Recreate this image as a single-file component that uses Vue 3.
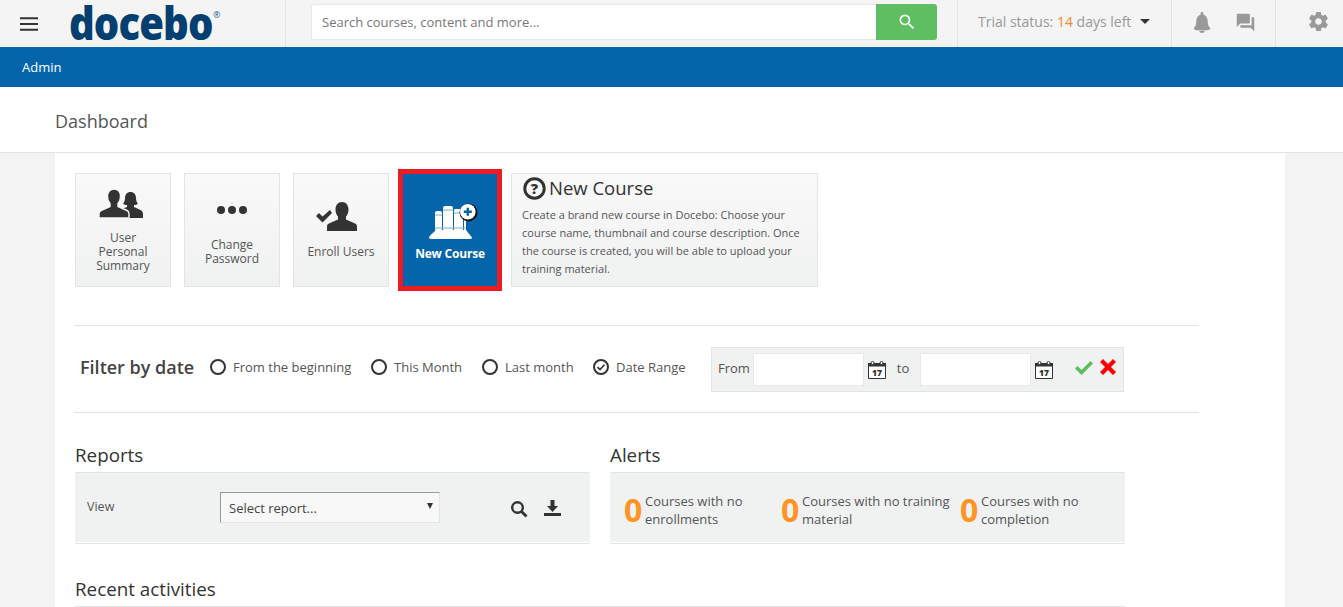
<script setup>
const alerts = [
  { label: 'Courses with no enrollments', w: 157, tw: 120 },
  { label: 'Courses with no training material', w: 179, tw: 152 },
  { label: 'Courses with no completion', w: 140, tw: 120 }
]
const radios = [
  { label: 'From the beginning', w: 161, on: false },
  { label: 'This Month', w: 111, on: false },
  { label: 'Last month', w: 111, on: false },
  { label: 'Date Range', w: 100, on: true }
]
const person = 'M15 0c4 0 6.500 3 6.500 7.500 0 3-1 5.500-2.500 7v3l9 4c1.500.7 2 1.800 2 3.500v4H0v-4c0-1.700.5-2.800 2-3.500l9-4v-3C9.500 13 8.500 10.500 8.500 7.500 8.500 3 11 0 15 0z'
</script>

<template>
  <div class="page">
    <header class="top">
      <div class="brand">
        <svg class="burger" width="18" height="14" viewBox="0 0 18 14"><path d="M0 1.200h18M0 7h18M0 12.800h18" stroke="#333" stroke-width="2"/></svg>
        <span class="logo">docebo</span><span class="reg">®</span>
      </div>
      <div class="search">
        <div class="search-input">Search courses, content and more...</div>
        <div class="search-btn">
          <svg width="20" height="20" viewBox="0 0 24 24" fill="#fff"><path d="M15.500 14h-.79l-.28-.27A6.471 6.471 0 0 0 16 9.500 6.500 6.500 0 1 0 9.500 16c1.610 0 3.090-.59 4.230-1.570l.27.28v.79l5 4.990L20.490 19l-4.990-5zm-6 0C7.010 14 5 11.990 5 9.500S7.010 5 9.500 5 14 7.010 14 9.500 11.990 14 9.500 14z"/></svg>
        </div>
      </div>
      <div class="trial">
        <span>Trial status: <b>14</b> days left</span>
        <i class="caret"></i>
      </div>
      <div class="notify">
        <svg width="24" height="24" viewBox="0 0 24 24" fill="#999"><path d="M12 23c1.500 0 2.600-.9 2.600-2H9.400c0 1.100 1.100 2 2.600 2zm8-4.500v-1c-1.600-1.300-2.300-2.700-2.300-6.500 0-3.300-1.800-5.600-4.300-6.300V3.500a1.400 1.400 0 0 0-2.800 0v1.200C8.100 5.400 6.300 7.700 6.300 11c0 3.800-.7 5.200-2.300 6.500v1c0 1 1 1.500 3 1.700 1.500.2 3.200.3 5 .3s3.500-.1 5-.3c2-.2 3-.7 3-1.700z"/></svg>
        <svg width="21" height="21" viewBox="0 0 24 24" fill="#999"><path d="M21 6h-2v9H6v2c0 .55.45 1 1 1h11l4 4V7c0-.55-.45-1-1-1zm-4 6V3c0-.55-.45-1-1-1H3c-.55 0-1 .45-1 1v14l4-4h10c.55 0 1-.45 1-1z"/></svg>
      </div>
      <div class="gear">
        <svg width="23" height="23" viewBox="0 0 24 24" fill="#999"><path d="M19.430 12.980c.04-.32.07-.64.07-.98s-.03-.66-.07-.98l2.110-1.650c.19-.15.24-.42.12-.64l-2-3.460c-.12-.22-.39-.3-.61-.22l-2.490 1c-.52-.4-1.080-.73-1.690-.98l-.38-2.650A.488.488 0 0 0 14 2h-4c-.25 0-.46.18-.49.42l-.38 2.650c-.61.25-1.170.59-1.690.98l-2.490-1c-.23-.09-.49 0-.61.22l-2 3.460c-.13.22-.07.49.12.64l2.110 1.650c-.04.32-.07.65-.07.98s.03.66.07.98l-2.110 1.650c-.19.15-.24.42-.12.64l2 3.460c.12.22.39.3.61.22l2.490-1c.52.4 1.080.73 1.690.98l.38 2.650c.03.24.24.42.49.42h4c.25 0 .46-.18.49-.42l.38-2.650c.61-.25 1.170-.59 1.690-.98l2.490 1c.23.09.49 0 .61-.22l2-3.460c.12-.22.07-.49-.12-.64l-2.110-1.650zM12 15.500c-1.930 0-3.500-1.570-3.500-3.500s1.570-3.500 3.500-3.500 3.500 1.570 3.500 3.500-1.570 3.500-3.500 3.500z"/></svg>
      </div>
    </header>

    <nav class="adminbar">Admin</nav>
    <div class="titlebar">Dashboard</div>

    <main class="content">
      <section class="cards">
        <div class="card">
          <svg width="44" height="29" viewBox="0 0 44 29" fill="#333">
            <path d="M31.500 3c3.500 0 5.500 2.600 5.500 6 0 2.600.8 4.500 2 5.700-1 .9-2.400 1.300-4 1.300v2l6 2.800c1.800.8 3 1.800 3 4.200v4H23v-9c1.500-.8 3-1.400 5-2v-2c-1.600 0-3-.4-4-1.300 1.200-1.200 2-3.100 2-5.700 0-3.400 2-6 5.500-6z"/>
            <path :d="person" stroke="#f5f6f6" stroke-width="1.400"/>
          </svg>
          <span class="t1">User Personal Summary</span>
        </div>
        <div class="card">
          <svg width="32" height="12" viewBox="0 0 32 12" fill="#333"><circle cx="5" cy="6" r="4"/><circle cx="16" cy="6" r="4"/><circle cx="27" cy="6" r="4"/></svg>
          <span class="t2">Change Password</span>
        </div>
        <div class="card">
          <svg width="42" height="30" viewBox="0 0 42 30" fill="#333">
            <path d="M0 14l3-3 3.500 3.500L14 8l2 3-9.500 9.500z"/>
            <path :d="person" transform="translate(11 0)"/>
          </svg>
          <span class="t3">Enroll Users</span>
        </div>
        <div class="hot">
          <div class="hot-in">
            <svg width="50" height="36" viewBox="0 0 50 36">
              <path d="M1 34.500c0-1 1.500-2.500 7-7.500h30l6 7.500c0 .8-.5 1.500-2 1.500H3c-1.200 0-2-.6-2-1.500z" fill="#fff"/>
              <g fill="#fff"><rect x="7" y="8" width="7" height="20" rx="2"/><rect x="15" y="3" width="10" height="25" rx="2"/><rect x="26" y="6" width="9" height="22" rx="1"/><rect x="36" y="14" width="2" height="14"/></g>
              <path d="M7 12h7M15 7h10M26 10h9M7 25h31" stroke="#7fabcd" stroke-width="1"/>
              <circle cx="40.500" cy="9.500" r="9" fill="#111"/>
              <circle cx="39.800" cy="8.800" r="7.800" fill="#fff"/>
              <path d="M39.800 4.800v8M35.800 8.800h8" stroke="#0565ab" stroke-width="2.400"/>
            </svg>
            <span class="t4">New Course</span>
          </div>
        </div>
        <div class="info">
          <div class="info-h">
            <svg width="23" height="23" viewBox="0 0 22 22"><circle cx="11" cy="11" r="9.300" fill="none" stroke="#333" stroke-width="2.800"/><text x="11" y="16" text-anchor="middle" class="qm">?</text></svg>
            <span>New Course</span>
          </div>
          <p>Create a brand new course in Docebo: Choose your course name, thumbnail and course description. Once the course is created, you will be able to upload your training material.</p>
        </div>
      </section>

      <section class="filter">
        <h2>Filter by date</h2>
        <div class="radios">
          <label v-for="r in radios" :key="r.label" class="radio" :style="{ width: r.w + 'px' }">
            <i class="dot">
              <svg v-if="r.on" width="10" height="10" viewBox="0 0 10 10"><path d="M1.500 5.200l2.500 2.400 4.500-4.800" fill="none" stroke="#333" stroke-width="1.600"/></svg>
            </i>
            {{ r.label }}
          </label>
        </div>
        <div class="range">
          <span class="from">From</span>
          <div class="field"></div>
          <svg class="cal" width="18" height="18" viewBox="0 0 18 18"><path d="M.5 2.500h17v15H.5z" fill="#fff" stroke="#333"/><path d="M0 2h18v3.500H0z" fill="#333"/><circle cx="4.500" cy="2" r="1.500" fill="#fff" stroke="#333"/><circle cx="13.500" cy="2" r="1.500" fill="#fff" stroke="#333"/><text x="9" y="15" text-anchor="middle" class="calt">17</text></svg>
          <span class="to">to</span>
          <div class="field"></div>
          <svg class="cal" width="18" height="18" viewBox="0 0 18 18"><path d="M.5 2.500h17v15H.5z" fill="#fff" stroke="#333"/><path d="M0 2h18v3.500H0z" fill="#333"/><circle cx="4.500" cy="2" r="1.500" fill="#fff" stroke="#333"/><circle cx="13.500" cy="2" r="1.500" fill="#fff" stroke="#333"/><text x="9" y="15" text-anchor="middle" class="calt">17</text></svg>
          <svg class="ok" width="18" height="14" viewBox="0 0 18 14"><path d="M0 7.500l2.500-2.500 4 4L15.500 0 18 2.500 6.500 14z" fill="#5dbd5e"/></svg>
          <svg class="no" width="16" height="16" viewBox="0 0 16 16"><path d="M0 3l3-3 5 5 5-5 3 3-5 5 5 5-3 3-5-5-5 5-3-3 5-5z" fill="#f00"/></svg>
        </div>
      </section>

      <section class="cols">
        <div class="col">
          <h3>Reports</h3>
          <div class="panel rep">
            <span class="view">View</span>
            <div class="select">Select report...<i></i></div>
            <svg class="mag" width="18" height="18" viewBox="0 0 18 18"><circle cx="7.500" cy="7.500" r="5.300" fill="none" stroke="#333" stroke-width="2.400"/><path d="M11.500 11.500l5 5" stroke="#333" stroke-width="2.800"/></svg>
            <svg class="dl" width="17" height="16" viewBox="0 0 17 16" fill="#333"><path d="M6.500 0h4v6H14l-5.500 6L3 6h3.500z"/><path d="M0 13h17v3H0z"/></svg>
          </div>
        </div>
        <div class="col">
          <h3>Alerts</h3>
          <div class="panel alerts">
            <div v-for="a in alerts" :key="a.label" class="alert" :style="{ width: a.w + 'px' }">
              <b>0</b><span :style="{ width: a.tw + 'px' }">{{ a.label }}</span>
            </div>
          </div>
        </div>
      </section>

      <h3 class="recent">Recent activities</h3>
    </main>
  </div>
</template>

<style scoped>
.page { width: 1343px; height: 607px; overflow: hidden; background: #f3f3f3; font-family: "Open Sans", sans-serif; color: #333; }
.top { height: 47px; background: #f4f4f4; display: flex; align-items: stretch; }
.brand { flex: none; width: 285px; box-sizing: content-box; border-right: 1px solid #e4e4e4; display: flex; align-items: center; position: relative; }
.burger { margin-left: 20px; flex: none; }
.logo { flex: none; width: 163px; margin-left: 31px; margin-top: -3px; font: 800 46px/40px "Open Sans", sans-serif; letter-spacing: -1px; color: #033f71; transform: scaleX(.87); transform-origin: 0 50%; }
.reg { position: absolute; left: 213px; top: 9px; font-size: 9px; line-height: 12px; color: #33648f; }
.search { flex: none; margin: 4px 0 0 25px; width: 626px; height: 36px; display: flex; }
.search-input { flex: 1; background: #fff; border: 1px solid #e8e8e8; border-right: 0; border-radius: 3px 0 0 3px; font-size: 13px; line-height: 34px; padding-left: 10px; color: #777; }
.search-btn { width: 61px; background: #5fbe62; border-radius: 0 3px 3px 0; display: flex; align-items: center; justify-content: center; }
.trial { flex: none; margin-left: 20px; width: 214px; border-left: 1px solid #e4e4e4; display: flex; align-items: center; padding-left: 20px; box-sizing: border-box; font-size: 14px; color: #999; padding-bottom: 5px; }
.trial b { font-weight: 400; color: #f58a2c; }
.caret { margin-left: 9px; border: 5px solid transparent; border-top: 5px solid #333; border-bottom: 0; }
.notify { flex: none; width: 105px; box-sizing: border-box; border-left: 1px solid #e4e4e4; border-right: 1px solid #e4e4e4; display: flex; align-items: center; padding: 0 0 3px 18px; gap: 21px; }
.gear { flex: 1; display: flex; padding: 10px 0 0 31px; }
.adminbar { height: 40px; background: #0565ab; color: #fff; font-size: 13px; line-height: 40px; padding-left: 22px; }
.titlebar { height: 66px; box-sizing: border-box; background: #fff; border-bottom: 1px solid #e4e4e4; font-size: 18px; line-height: 68px; padding-left: 55px; color: #555; }
.content { margin-left: 55px; width: 1230px; height: 454px; background: #fff; padding-left: 19px; box-sizing: border-box; position: relative; }
.cards { display: flex; align-items: flex-start; padding: 16px 0 0 1px; height: 173px; box-sizing: border-box; width: 1125px; border-bottom: 1px solid #e4e4e4; }
.cards > * { flex: none; }
.card { width: 96px; height: 114px; margin: 4px 13px 0 0; box-sizing: border-box; border: 1px solid #e4e4e4; background: linear-gradient(#f9f9f9, #f0f1f1); display: flex; flex-direction: column; align-items: center; text-align: center; font-size: 12px; line-height: 14px; color: #555; position: relative; }
.card svg { position: absolute; }
.card span { position: absolute; left: 4px; right: 4px; }
.card:nth-child(1) svg { top: 15px; left: 23px; }
.card span.t1 { top: 57px; left: 14px; right: 14px; }
.card:nth-child(2) svg { top: 30px; left: 31px; }
.t2 { top: 64px; }
.card:nth-child(3) svg { top: 28px; left: 22px; }
.t3 { top: 71px; }
.card:nth-child(3) { margin-right: 9px; }
.hot { width: 104px; height: 122px; box-sizing: border-box; border: 5px solid #ed1c24; margin-right: 9px; }
.hot-in { height: 100%; background: #0565ab; color: #fff; position: relative; }
.hot-in svg { position: absolute; left: 25px; top: 29px; }
.t4 { position: absolute; left: 0; right: 0; top: 71px; text-align: center; font-size: 12px; font-weight: 700; letter-spacing: -0.200px; }
.info { width: 307px; height: 114px; margin-top: 4px; box-sizing: border-box; border: 1px solid #e4e4e4; background: linear-gradient(#f9f9f9, #f0f1f1); padding: 2px 10px; }
.info-h { display: flex; align-items: center; gap: 3px; font-size: 18.500px; line-height: 24px; font-weight: 500; color: #333; }
.info-h svg { margin-left: 1px; }
.qm { font: 800 14px "Open Sans", sans-serif; fill: #333; }
.info p { margin: 6px 0 0; font-size: 11px; line-height: 18px; color: #555; }
.filter { width: 1125px; height: 87px; border-bottom: 1px solid #e4e4e4; display: flex; align-items: center; box-sizing: border-box; padding: 0 0 5px 6px; }
.filter h2 { margin: 0; font-size: 18px; font-weight: 600; line-height: 24px; width: 130px; flex: none; color: #444; }
.radios { display: flex; flex: none; width: 501px; }
.radio { flex: none; display: flex; align-items: center; gap: 7px; font-size: 13px; color: #555; }
.dot { flex: none; width: 16px; height: 16px; box-sizing: border-box; border: 2px solid #333; border-radius: 50%; display: flex; align-items: center; justify-content: center; }
.range { width: 413px; height: 45px; flex: none; margin-top: 6px; box-sizing: border-box; border: 1px solid #e4e4e4; background: #f0f1f1; display: flex; align-items: center; font-size: 13px; color: #555; padding-left: 6px; }
.from { width: 35px; flex: none; margin-top: -3px; }
.field { width: 111px; height: 33px; flex: none; box-sizing: border-box; background: #fff; border: 1px solid #e8e8e8; }
.cal { margin-left: 4px; flex: none; }
.calt { font: 800 8.500px "Open Sans", sans-serif; fill: #333; }
.to { width: 34px; text-align: center; flex: none; box-sizing: border-box; margin-top: -3px; }
.ok { margin-left: 22px; flex: none; margin-top: -3px; }
.no { margin-left: 7px; margin-top: -5px; flex: none; }
.cols { display: flex; gap: 20px; width: 1050px; }
.col { width: 515px; flex: none; }
.col h3, .recent { margin: 0; font-size: 18.800px; font-weight: 500; line-height: 24px; color: #333; }
.col h3 { padding: 30px 0 5px; }
.col:first-child { margin-left: 1px; }
.panel { height: 70px; box-sizing: border-box; background: #f0f1f1; border-top: 1px solid #e4e4e4; box-shadow: 0 1px 0 #fff, 0 2px 0 #e4e4e4; position: relative; margin-bottom: 2px; }
.rep { display: flex; align-items: flex-start; }
.view { flex: none; font-size: 12.500px; color: #555; padding: 26px 0 0 12px; line-height: 16px; width: 133px; }
.select { width: 220px; height: 31px; flex: none; margin-top: 19px; box-sizing: border-box; border: 1px solid #e4e4e4; border-top-color: #999; border-left-color: #999; background: #f8f8f8; font-size: 13px; line-height: 31px; padding-left: 8px; color: #444; position: relative; }
.select i { position: absolute; right: 6px; top: 10px; border: 3.500px solid transparent; border-top: 6px solid #333; border-bottom: 0; }
.mag { flex: none; margin: 27px 0 0 70px; }
.dl { flex: none; margin: 27px 0 0 16px; }
.alerts { display: flex; padding-left: 14px; }
.alert { flex: none; display: flex; align-items: flex-start; padding-top: 18px; font-size: 13px; line-height: 18px; color: #555; }
.alert span { margin-top: 1px; }
.alert b { font-size: 32px; line-height: 38px; font-weight: 700; color: #ff9425; width: 21px; flex: none; }
.recent { padding-top: 33px; margin-left: 1px; padding-bottom: 5px; width: 1050px; border-bottom: 1px solid #e4e4e4; }
</style>
